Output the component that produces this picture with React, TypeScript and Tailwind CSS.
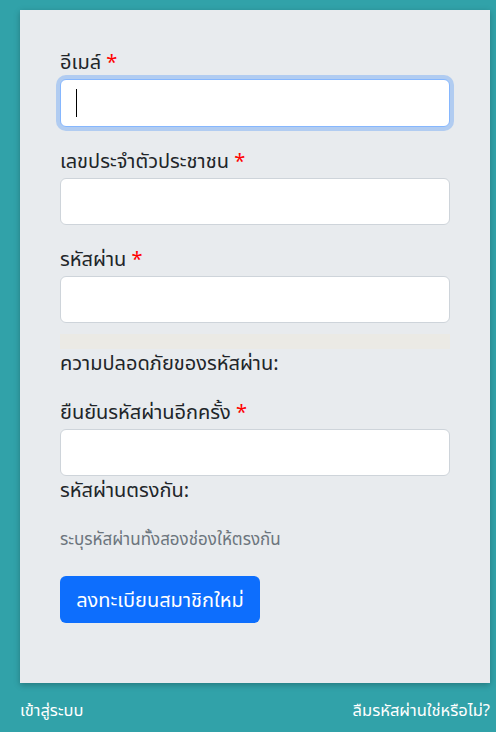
export default function App() {
  const labelCls = 'block pt-1 text-[20px] leading-[27px] text-[#212529] mb-1'
  const inputCls =
    'block w-full h-[47px] rounded-md border border-[#ced4da] bg-white px-4 text-[18px] outline-none'

  return (
    <div
      className="min-h-[732px] w-[496px] bg-[#31a2a9] pt-[10px]"
      style={{ fontFamily: '"Noto Sans", "Noto Sans Thai", "Liberation Sans", sans-serif' }}
    >
      <div className="ml-5 mr-[6px] bg-[#e8ebee] px-10 pt-[34px] pb-[60px] shadow-[0_2px_6px_rgba(0,0,0,0.25)]">
        {/* Email */}
        <div className="mb-4">
          <label className={labelCls}>
            อีเมล์ <span className="text-[#ff0000]">*</span>
          </label>
          <div className="relative">
            <div className="h-[48px] w-full rounded-md border border-[#86b7fe] bg-white shadow-[0_0_0_4px_rgba(13,110,253,0.25)]" />
            <div className="absolute left-4 top-[10px] h-[28px] w-px bg-black" />
          </div>
        </div>

        {/* ID */}
        <div className="mb-4">
          <label className={labelCls}>
            เลขประจำตัวประชาชน <span className="text-[#ff0000]">*</span>
          </label>
          <input className={inputCls} />
        </div>

        {/* Password */}
        <div className="mb-4">
          <label className={labelCls}>
            รหัสผ่าน <span className="text-[#ff0000]">*</span>
          </label>
          <input type="password" className={inputCls} />
          <div className="mt-[11px] h-[15px] w-full bg-[#ebeae5]" />
          <p className="text-[20px] leading-[27px] text-[#212529]">ความปลอดภัยของรหัสผ่าน:</p>
        </div>

        {/* Confirm */}
        <div className="mb-4 pt-[2px]">
          <label className={labelCls}>
            ยืนยันรหัสผ่านอีกครั้ง <span className="text-[#ff0000]">*</span>
          </label>
          <input type="password" className={inputCls} />
          <p className="text-[20px] leading-[27px] text-[#212529]">รหัสผ่านตรงกัน:</p>
        </div>

        <p className="mt-[24px] text-[17px] leading-6 text-[#6c757d]">ระบุรหัสผ่านทั้งสองช่องให้ตรงกัน</p>

        <button className="mt-[25px] h-[47px] w-[200px] rounded-md bg-[#0d6efd] text-[20px] text-white">
          ลงทะเบียนสมาชิกใหม่
        </button>
      </div>

      <div className="ml-5 mr-[6px] mt-[15px] flex justify-between text-[16.5px] leading-6 text-white">
        <a>เข้าสู่ระบบ</a>
        <a>ลืมรหัสผ่านใช่หรือไม่?</a>
      </div>
    </div>
  )
}
